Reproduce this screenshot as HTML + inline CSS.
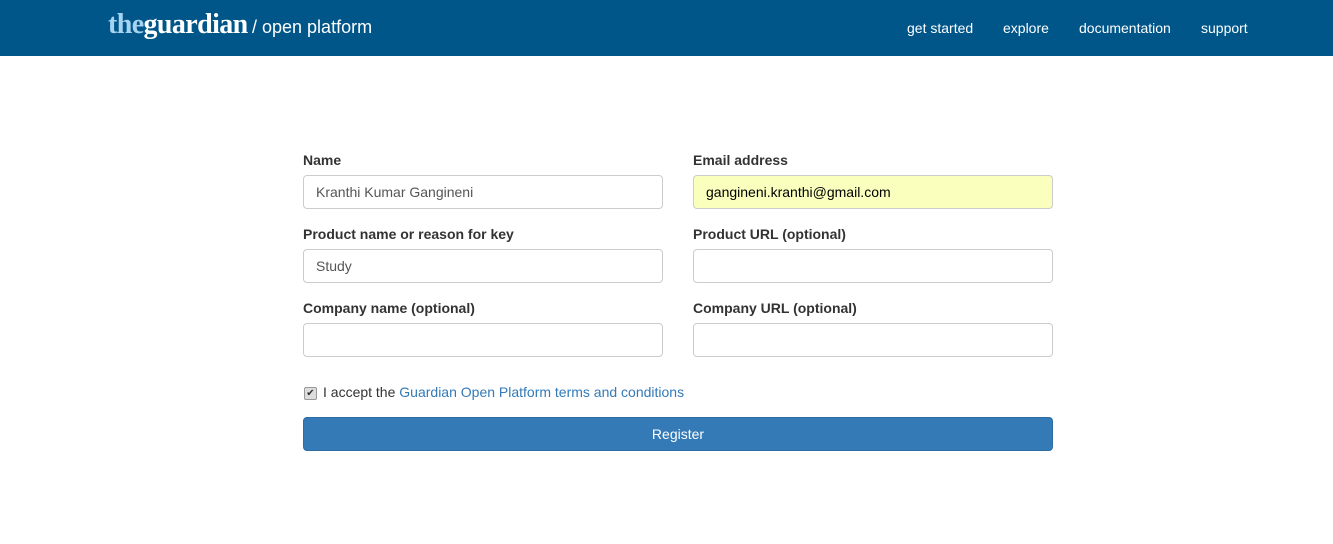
<!DOCTYPE html>
<html><head><style>
body{margin:0;width:1333px;height:544px;background:#fff;font-family:"Liberation Sans",Arial,sans-serif;font-size:14px;color:#333;position:relative;overflow:hidden}
.hdr{position:absolute;left:0;top:0;width:1333px;height:56px;background:#005689}
.logo{position:absolute;left:108px;top:9px;font-family:"Liberation Serif",serif;font-weight:bold;font-size:28px;letter-spacing:-0.6px;color:#fff}
.logo .t{color:#a6d3f0}
.op{position:absolute;left:252px;top:17px;color:#fff;font-size:18px}
.nav{position:absolute;top:20px;color:#fff;font-size:14px}
.lbl{position:absolute;font-weight:bold;font-size:14px}
.in{position:absolute;border:1px solid #ccc;border-radius:4px;box-sizing:border-box;width:360px;height:34px;padding:0 12px;line-height:32px;color:#555}
.btn{position:absolute;left:303px;top:417px;width:750px;height:34px;background:#337ab7;border:1px solid #2e6da4;box-sizing:border-box;border-radius:4px;color:#fff;text-align:center;line-height:32px}
</style></head><body>
<div class="hdr">
<div class="logo"><span class="t">the</span>guardian</div>
<div class="op">/ open platform</div>
<div class="nav" style="left:907px">get started</div>
<div class="nav" style="left:1003px">explore</div>
<div class="nav" style="left:1079px">documentation</div>
<div class="nav" style="left:1201px">support</div>
</div>
<div class="lbl" style="left:303px;top:152px">Name</div>
<div class="lbl" style="left:693px;top:152px">Email address</div>
<div class="in" style="left:303px;top:175px">Kranthi Kumar Gangineni</div>
<div class="in" style="left:693px;top:175px;background:#faffbd;color:#000">gangineni.kranthi@gmail.com</div>
<div class="lbl" style="left:303px;top:226px">Product name or reason for key</div>
<div class="lbl" style="left:693px;top:226px">Product URL (optional)</div>
<div class="in" style="left:303px;top:249px">Study</div>
<div class="in" style="left:693px;top:249px"></div>
<div class="lbl" style="left:303px;top:300px">Company name (optional)</div>
<div class="lbl" style="left:693px;top:300px">Company URL (optional)</div>
<div class="in" style="left:303px;top:323px"></div>
<div class="in" style="left:693px;top:323px"></div>
<div style="position:absolute;left:304px;top:387px;width:11px;height:11px;border:1px solid #999;border-radius:2px;background:#ddd;font-size:10px;line-height:11px;text-align:center;color:#333">✔</div>
<div style="position:absolute;left:323px;top:384px">I accept the <span style="color:#337ab7">Guardian Open Platform terms and conditions</span></div>
<div class="btn">Register</div>
</body></html>
